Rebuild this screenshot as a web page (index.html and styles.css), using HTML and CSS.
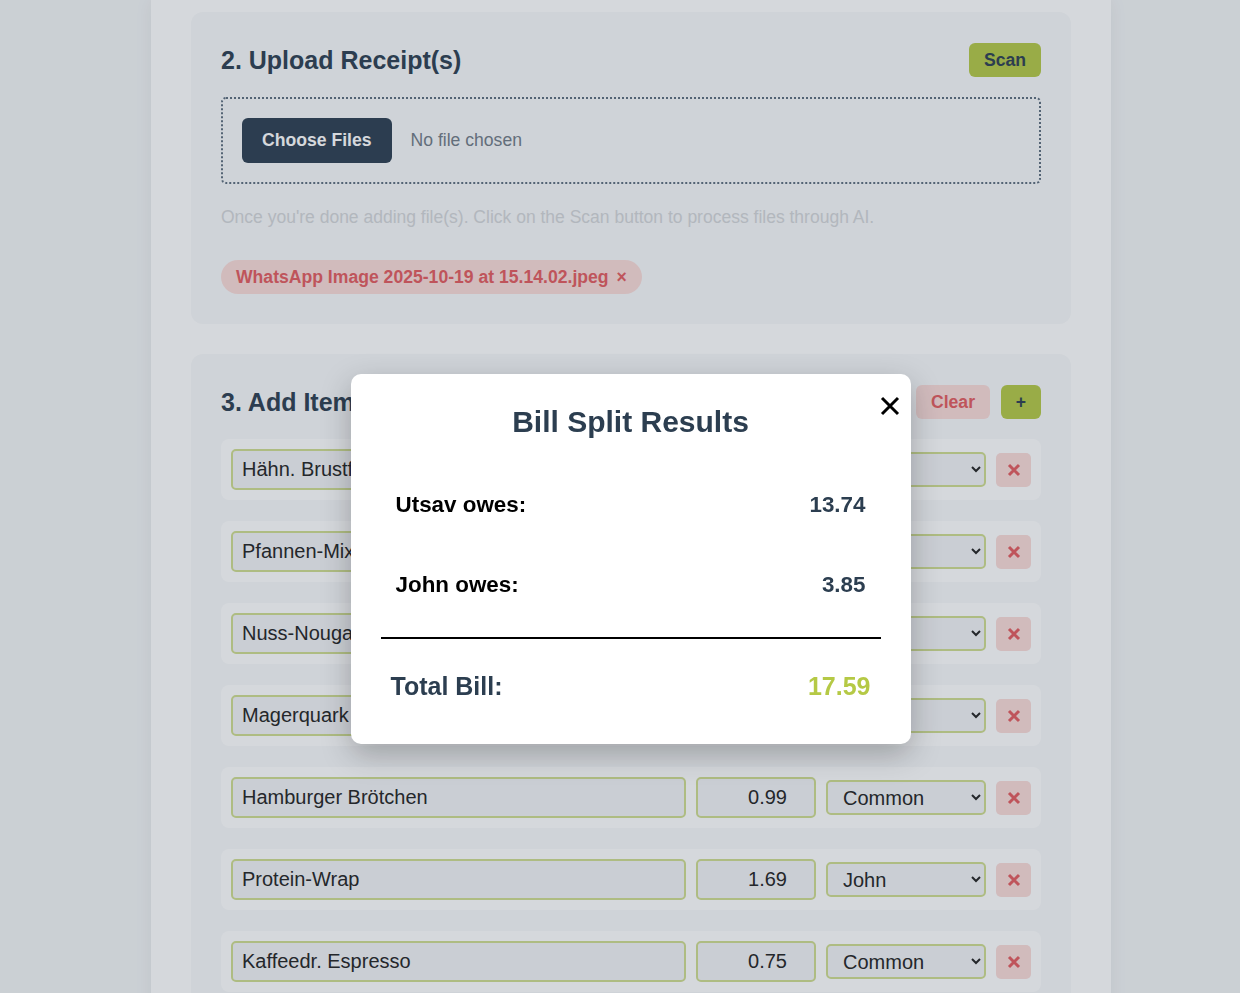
FILE: index.html
```html
<!DOCTYPE html>
<html lang="en">
<head>
<meta charset="utf-8">
<title>Bill Splitter</title>
<link rel="stylesheet" href="styles.css">
</head>
<body>
<main class="container">
  <section class="card">
    <div class="card-header">
      <h2 class="card-title">2. Upload Receipt(s)</h2>
      <button class="btn btn-accent">Scan</button>
    </div>
    <div class="upload-box">
      <span class="file-btn">Choose Files</span>
      <span class="file-status">No file chosen</span>
    </div>
    <p class="hint">Once you're done adding file(s). Click on the Scan button to process files through AI.</p>
    <div class="chips">
      <span class="chip">WhatsApp Image 2025-10-19 at 15.14.02.jpeg <span class="chip-x">×</span></span>
    </div>
  </section>

  <section class="card">
    <div class="card-header">
      <h2 class="card-title">3. Add Items</h2>
      <div class="header-actions">
        <button class="btn btn-danger">Clear</button>
        <button class="btn btn-accent btn-plus">+</button>
      </div>
    </div>
    <div class="items">
      <div class="item-row">
        <input class="field name" value="Hähn. Brustfilet">
        <input class="field price" value="4.49">
        <select class="field who"><option>Utsav</option><option>John</option><option>Common</option></select>
        <button class="del"><svg viewBox="0 0 14 14" width="14" height="14"><path d="M2 2L12 12M12 2L2 12"/></svg></button>
      </div>
      <div class="item-row">
        <input class="field name" value="Pfannen-Mix">
        <input class="field price" value="2.79">
        <select class="field who"><option>Utsav</option><option>John</option><option>Common</option></select>
        <button class="del"><svg viewBox="0 0 14 14" width="14" height="14"><path d="M2 2L12 12M12 2L2 12"/></svg></button>
      </div>
      <div class="item-row">
        <input class="field name" value="Nuss-Nougat-Creme">
        <input class="field price" value="2.29">
        <select class="field who"><option>Utsav</option><option>John</option><option>Common</option></select>
        <button class="del"><svg viewBox="0 0 14 14" width="14" height="14"><path d="M2 2L12 12M12 2L2 12"/></svg></button>
      </div>
      <div class="item-row">
        <input class="field name" value="Magerquark">
        <input class="field price" value="1.19">
        <select class="field who"><option>Utsav</option><option>John</option><option>Common</option></select>
        <button class="del"><svg viewBox="0 0 14 14" width="14" height="14"><path d="M2 2L12 12M12 2L2 12"/></svg></button>
      </div>
      <div class="item-row">
        <input class="field name" value="Hamburger Brötchen">
        <input class="field price" value="0.99">
        <select class="field who"><option>Common</option><option>Utsav</option><option>John</option></select>
        <button class="del"><svg viewBox="0 0 14 14" width="14" height="14"><path d="M2 2L12 12M12 2L2 12"/></svg></button>
      </div>
      <div class="item-row">
        <input class="field name" value="Protein-Wrap">
        <input class="field price" value="1.69">
        <select class="field who"><option>John</option><option>Utsav</option><option>Common</option></select>
        <button class="del"><svg viewBox="0 0 14 14" width="14" height="14"><path d="M2 2L12 12M12 2L2 12"/></svg></button>
      </div>
      <div class="item-row">
        <input class="field name" value="Kaffeedr. Espresso">
        <input class="field price" value="0.75">
        <select class="field who"><option>Common</option><option>Utsav</option><option>John</option></select>
        <button class="del"><svg viewBox="0 0 14 14" width="14" height="14"><path d="M2 2L12 12M12 2L2 12"/></svg></button>
      </div>
      <div class="item-row">
        <input class="field name" value="Bananen">
        <input class="field price" value="1.29">
        <select class="field who"><option>Common</option><option>Utsav</option><option>John</option></select>
        <button class="del"><svg viewBox="0 0 14 14" width="14" height="14"><path d="M2 2L12 12M12 2L2 12"/></svg></button>
      </div>
    </div>
  </section>
</main>

<div class="overlay">
  <div class="modal">
    <button class="modal-close" aria-label="Close"><svg viewBox="0 0 20 20" width="20" height="20"><path d="M2 2L18 18M18 2L2 18"/></svg></button>
    <h2 class="modal-title">Bill Split Results</h2>
    <div class="result-row"><span class="result-name">Utsav owes:</span><span class="result-amount">13.74</span></div>
    <div class="result-row"><span class="result-name">John owes:</span><span class="result-amount">3.85</span></div>
    <div class="total-row"><span class="total-label">Total Bill:</span><span class="total-amount">17.59</span></div>
  </div>
</div>
</body>
</html>
```

FILE: styles.css
```css
* { box-sizing: border-box; }

html, body {
  margin: 0;
  height: 100%;
  overflow: hidden;
}

body {
  background: #f3f5f6;
  font-family: "Liberation Sans", Arial, sans-serif;
  color: #2c3e50;
  padding-left: 22px;
}

.container {
  width: 960px;
  margin: 0 auto;
  background: #ffffff;
  padding: 12px 40px 40px;
  box-shadow: 0 0 18px rgba(0, 0, 0, 0.06);
  display: flex;
  flex-direction: column;
  gap: 30px;
  min-height: 100%;
}

.card {
  background: #f8f9fa;
  border-radius: 12px;
  padding: 30px;
}

.card-header {
  display: flex;
  align-items: center;
  justify-content: space-between;
  min-height: 36px;
  margin-bottom: 19px;
}

.card-title {
  margin: 0;
  font-size: 25px;
  font-weight: bold;
  color: #2c3e50;
  line-height: 28px;
}

.header-actions {
  display: flex;
  gap: 11px;
}

.btn {
  border: none;
  border-radius: 6px;
  font-family: inherit;
  font-size: 17.6px;
  font-weight: bold;
  line-height: 18px;
  padding: 8px 15px;
  cursor: pointer;
}

.btn-accent {
  background: #b5c945;
  color: #2c3e50;
}

.btn-plus {
  width: 40px;
  padding: 8px 0;
}

.btn-danger {
  background: #fadbd8;
  color: #e45b5e;
}

.upload-box {
  border: 2px dotted #5d6d7e;
  border-radius: 5px;
  padding: 19px 19px;
  display: flex;
  align-items: center;
  gap: 19px;
}

.file-btn {
  background: #2c3e50;
  color: #ffffff;
  font-size: 17.6px;
  font-weight: bold;
  line-height: 21px;
  padding: 12px 20px;
  border-radius: 6px;
}

.file-status {
  font-size: 17.6px;
  color: #717b86;
}

.hint {
  margin: 23px 0 0;
  font-size: 17.5px;
  line-height: 20px;
  color: #d4d6d9;
}

.chips {
  margin-top: 33px;
  display: flex;
}

.chip {
  background: #fadbd8;
  color: #e45b5e;
  font-size: 17.6px;
  font-weight: bold;
  line-height: 18px;
  padding: 8px 15px;
  border-radius: 17px;
}

.chip-x {
  margin-left: 3px;
}

.items {
  display: flex;
  flex-direction: column;
  gap: 21px;
}

.item-row {
  background: #ffffff;
  border-radius: 8px;
  padding: 10px;
  display: flex;
  align-items: center;
  gap: 10px;
}

.field {
  font-family: inherit;
  font-size: 20px;
  color: #222;
  background: #f2f3f5;
  border: 2px solid #cfdc8f;
  border-radius: 5px;
}

.name {
  flex: 1;
  min-width: 0;
  height: 41px;
  padding: 0 9px;
}

.price {
  width: 120px;
  height: 41px;
  padding: 0 27px 0 9px;
  text-align: right;
}

.who {
  width: 160px;
  height: 35px;
  padding: 0 8px 0 11px;
}

.del {
  width: 35px;
  height: 34px;
  border: none;
  border-radius: 5px;
  background: #fadbd8;
  display: flex;
  align-items: center;
  justify-content: center;
  padding: 0;
}

.del svg path {
  stroke: #e45b5e;
  stroke-width: 3;
  fill: none;
}

.overlay {
  position: fixed;
  inset: 0;
  background: rgba(44, 62, 80, 0.2);
  display: flex;
  justify-content: center;
  align-items: flex-start;
  padding: 374px 0 0 21px;
}

.modal {
  position: relative;
  width: 560px;
  background: #ffffff;
  border-radius: 10px;
  padding: 30px;
  box-shadow: 0 10px 30px rgba(0, 0, 0, 0.25);
}

.modal-close {
  position: absolute;
  top: 22px;
  right: 11px;
  border: none;
  background: none;
  padding: 0;
  width: 20px;
  height: 20px;
}

.modal-close svg path {
  stroke: #000;
  stroke-width: 3;
  fill: none;
}

.modal-title {
  margin: 0 0 25px;
  text-align: center;
  font-size: 30px;
  line-height: 36px;
  font-weight: bold;
  color: #2c3e50;
}

.result-row {
  display: flex;
  justify-content: space-between;
  align-items: center;
  height: 80px;
  padding: 0 15px;
  font-size: 22.4px;
  font-weight: bold;
}

.result-name {
  color: #000;
}

.result-amount {
  color: #2c3e50;
}

.total-row {
  display: flex;
  justify-content: space-between;
  align-items: center;
  margin-top: 12px;
  border-top: 2px solid #000;
  padding: 33px 10px 14px;
  font-size: 25px;
  line-height: 28px;
  font-weight: bold;
}

.total-label {
  color: #2c3e50;
}

.total-amount {
  color: #b5c945;
}
```
